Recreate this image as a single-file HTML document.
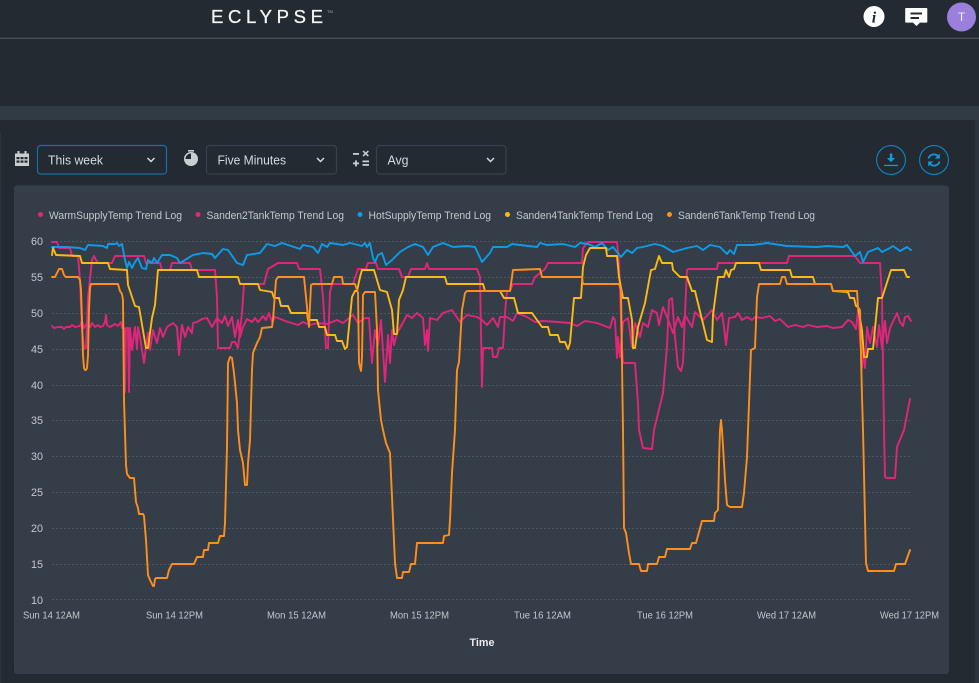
<!DOCTYPE html>
<html><head><meta charset="utf-8"><title>Eclypse</title>
<style>
html,body{margin:0;padding:0;background:#232a32;width:979px;height:683px;overflow:hidden;font-family:"Liberation Sans",sans-serif}
svg{position:absolute;left:0;top:0}
</style></head><body>
<svg width="979" height="683" viewBox="0 0 979 683" xmlns="http://www.w3.org/2000/svg" font-family="Liberation Sans, sans-serif">
<defs><filter id="soft" x="-2%" y="-2%" width="104%" height="104%"><feGaussianBlur stdDeviation="0.3"/></filter></defs>
<rect width="979" height="683" fill="#232a32"/>
<rect x="0" y="37.500" width="979" height="1.500" fill="#434b55"/>
<rect x="0" y="106" width="979" height="14" fill="#323a44"/>
<rect x="975" y="120" width="4" height="563" fill="#2c343d"/>
<rect x="0" y="132" width="1" height="551" fill="#2c343d"/>
<rect x="14" y="185.500" width="935" height="488.500" rx="3" fill="#353d48"/>

<!-- header -->
<text x="211" y="23" font-size="18.500" fill="#f2f4f5" stroke="#f2f4f5" stroke-width="0.300" textLength="112" lengthAdjust="spacing">ECLYPSE</text>
<text x="327" y="13" font-size="4" fill="#aab0b6">TM</text>
<circle cx="874" cy="16.500" r="10.500" fill="#fff"/>
<text x="874" y="22.500" font-size="16" font-weight="bold" font-style="italic" font-family="Liberation Serif, serif" fill="#232a32" text-anchor="middle">i</text>
<path d="M906 8h20.500a.8.800 0 0 1 .8.800v13a.8.800 0 0 1-.8.800h-6.500l-3.500 3.400-3.500-3.400h-7a.8.800 0 0 1-.8-.800v-13a.8.800 0 0 1 .8-.800z" fill="#fff"/>
<path d="M910.500 12.500h11.500v2h-11.500zM910.500 17h8.500v2h-8.500z" fill="#232a32"/>
<circle cx="961.500" cy="17" r="14.500" fill="#9a7fdc"/>
<text x="961.500" y="21" font-size="12" fill="#f3effc" text-anchor="middle">T</text>

<!-- toolbar icons -->
<g fill="#c9ced3">
<path d="M15 153.500h14v12.500h-14z"/>
<rect x="17.500" y="151" width="2" height="3"/><rect x="24.500" y="151" width="2" height="3"/>
</g>
<g fill="#232a32">
<rect x="16.500" y="157" width="3" height="2.200"/><rect x="20.500" y="157" width="3" height="2.200"/><rect x="24.500" y="157" width="3" height="2.200"/>
<rect x="16.500" y="160.500" width="3" height="2.200"/><rect x="20.500" y="160.500" width="3" height="2.200"/><rect x="24.500" y="160.500" width="3" height="2.200"/>
</g>
<rect x="188" y="150" width="6" height="1.600" fill="#c9ced3"/>
<circle cx="191" cy="159" r="7" fill="#c9ced3"/>
<path d="M191 159v-5.500a5.500 5.500 0 0 0-5.500 5.500z" fill="#232a32"/>
<g fill="#c9ced3">
<rect x="353" y="153" width="6" height="1.800"/>
<path d="M362.500 151.500l1.200-1 2 2 2-2 1.200 1-2 2 2 2-1.200 1-2-2-2 2-1.200-1 2-2z"/>
<rect x="353" y="162.500" width="6" height="1.800"/><rect x="355.100" y="160.400" width="1.800" height="6"/>
<rect x="362.500" y="160.500" width="6.500" height="1.800"/><rect x="362.500" y="164" width="6.500" height="1.800"/>
</g>

<!-- selects -->
<rect x="37.500" y="145.500" width="129" height="28.500" rx="3" fill="#232a32" stroke="#1a6fa3" stroke-width="1.200"/>
<rect x="206.500" y="145.500" width="130" height="28.500" rx="3" fill="#232a32" stroke="#39414b" stroke-width="1.200"/>
<rect x="376.500" y="145.500" width="129.500" height="28.500" rx="3" fill="#232a32" stroke="#39414b" stroke-width="1.200"/>
<g font-size="12.500" fill="#d6dadd">
<text x="48" y="164.300" textLength="55" lengthAdjust="spacingAndGlyphs">This week</text>
<text x="217.500" y="164.300" textLength="68.500" lengthAdjust="spacingAndGlyphs">Five Minutes</text>
<text x="387.500" y="164.300" textLength="21" lengthAdjust="spacingAndGlyphs">Avg</text>
</g>
<g fill="none" stroke="#d6dadd" stroke-width="1.500">
<path d="M147.500 158l3.500 3.500 3.500-3.500"/>
<path d="M317 158l3.500 3.500 3.500-3.500"/>
<path d="M487 158l3.500 3.500 3.500-3.500"/>
</g>

<!-- buttons -->
<circle cx="891" cy="160" r="14.400" fill="none" stroke="#0f86c4" stroke-width="1.100"/>
<circle cx="934" cy="160" r="14.400" fill="none" stroke="#0f86c4" stroke-width="1.100"/>
<path d="M889.800 153.500h2.500v4.500h2.800l-4.100 4.200-4.100-4.200h2.900z" fill="#0f9be0"/>
<rect x="884" y="164.800" width="14" height="1.300" fill="#0f9be0"/>
<g fill="none" stroke="#0f9be0" stroke-width="1.700">
<path d="M928.500 158.500a5.600 5.600 0 0 1 9.800-2"/>
<path d="M939.500 161.500a5.600 5.600 0 0 1-9.800 2"/>
</g>
<path d="M939.800 153.500v5h-5zM928.200 166.500v-5h5z" fill="#0f9be0"/>

<!-- legend -->
<g font-size="10.800" fill="#c3c8cd">
<text x="49" y="219" textLength="133" lengthAdjust="spacingAndGlyphs">WarmSupplyTemp Trend Log</text>
<text x="206.500" y="219" textLength="137.500" lengthAdjust="spacingAndGlyphs">Sanden2TankTemp Trend Log</text>
<text x="368.500" y="219" textLength="122.500" lengthAdjust="spacingAndGlyphs">HotSupplyTemp Trend Log</text>
<text x="516" y="219" textLength="137" lengthAdjust="spacingAndGlyphs">Sanden4TankTemp Trend Log</text>
<text x="678" y="219" textLength="137" lengthAdjust="spacingAndGlyphs">Sanden6TankTemp Trend Log</text>
</g>
<circle cx="40.500" cy="214.500" r="2.500" fill="#e5276f"/>
<circle cx="198" cy="214.500" r="2.500" fill="#e5276f"/>
<circle cx="360" cy="214.500" r="2.500" fill="#0f9be8"/>
<circle cx="507.500" cy="214.500" r="2.500" fill="#fdb913"/>
<circle cx="669.500" cy="214.500" r="2.500" fill="#ff8f1f"/>

<!-- grid -->
<g stroke="#4f5761" stroke-width="1" stroke-dasharray="2 2">
<path d="M52 241.500H911M52 277.500H911M52 313.500H911M52 349.500H911M52 385.500H911M52 420.500H911M52 456.500H911M52 492.500H911M52 528.500H911M52 564.500H911M52 599.500H911"/>
</g>
<g font-size="10.800" fill="#c3c8cd" text-anchor="end">
<text x="43" y="245">60</text><text x="43" y="281">55</text><text x="43" y="317">50</text><text x="43" y="353">45</text><text x="43" y="389">40</text><text x="43" y="424">35</text><text x="43" y="460">30</text><text x="43" y="496">25</text><text x="43" y="532">20</text><text x="43" y="568">15</text><text x="43" y="604">10</text>
</g>
<g font-size="10.500" fill="#c3c8cd">
<text x="23" y="618.500" textLength="57" lengthAdjust="spacingAndGlyphs">Sun 14 12AM</text>
<text x="146" y="618.500" textLength="57" lengthAdjust="spacingAndGlyphs">Sun 14 12PM</text>
<text x="267" y="618.500" textLength="59" lengthAdjust="spacingAndGlyphs">Mon 15 12AM</text>
<text x="390" y="618.500" textLength="59" lengthAdjust="spacingAndGlyphs">Mon 15 12PM</text>
<text x="514" y="618.500" textLength="57" lengthAdjust="spacingAndGlyphs">Tue 16 12AM</text>
<text x="637" y="618.500" textLength="56" lengthAdjust="spacingAndGlyphs">Tue 16 12PM</text>
<text x="757" y="618.500" textLength="59" lengthAdjust="spacingAndGlyphs">Wed 17 12AM</text>
<text x="880" y="618.500" textLength="59" lengthAdjust="spacingAndGlyphs">Wed 17 12PM</text>
</g>
<text x="482" y="646" font-size="10.800" font-weight="bold" fill="#e8eaec" text-anchor="middle">Time</text>

<!-- series -->
<g fill="none" stroke-width="1.900" stroke-linejoin="round" stroke-linecap="round" filter="url(#soft)">
<path stroke="#e0287a" d="M52 326L54 328 58 327 62 327 64 329 66 327 70 327 72 325 75 327 80 326 82 321 84 328 87 323 90 327 92 323 95 327 98 325 100 327 103 326 105 322 106 315 107 325 110 327 115 324 118 326 121 322 122 328 124 328 125 392 126 328 128 328 129 392 130 328 132 350 135 327 137 349 138 327 140 337 144 363 146 347 148 333 150 350 153 330 157 343 160 328 163 337 167 327 173 323 177 327 179 355 182 325 185 337 188 327 192 333 193 323 197 322 202 319 207 318 212 327 217 318 222 323 225 316 228 326 232 317 235 337 238 320 240 337 243 327 247 319 252 322 255 318 258 322 260 320 263 316 266 320 269 313 272 322 275 317 283 320 288 322 298 325 303 322 310 325 318 323 327 324 337 320 343 323 353 315 358 323 365 318 369 318 372 363 375 330 378 345 381 320 385 382 388 335 390 363 392 330 394 345 397 333 400 328 407 315 412 318 417 313 423 318 425 345 427 330 428 351 430 318 437 320 443 313 452 310 460 322 467 315 477 317 482 320 487 325 493 318 498 327 500 317 507 317 513 321 517 313 527 317 535 322 543 321 558 322 570 323 577 326 585 321 597 323 610 328 613 317 615 320 617 358 618 337 620 357 623 322 628 318 632 347 635 323 640 337 643 323 648 327 652 310 657 313 659 325 663 307 667 317 673 333 678 317 682 327 685 315 692 327 695 312 703 320 712 310 717 320 722 313 724 327 726 345 729 318 735 317 738 313 742 320 747 317 752 320 755 317 762 318 770 316 775 321 780 319 788 327 795 325 803 327 808 325 817 327 827 326 833 328 842 327 848 320 852 322 856 329 858 310 862 368 863 347 865 368 867 327 870 343 873 327 877 347 879 325 882 348 885 321 887 343 890 328 897 313 900 322 903 326 905 317 908 316 911 321"/>
<path stroke="#e0287a" d="M52 242L57 242 59 248 70 248 72 256 78 256 80 280 82 330 84 348 86 348 88 297 92 260 94 256 96 260 98 263 112 263 115 256 144 256 146 263 160 263 162 270 170 270 172 263 190 263 192 270 215 270 217 297 218 348 230 348 232 342 235 342 238 348 242 313 244 284 264 284 268 269 278 263 297 263 299 269 320 269 323 297 326 348 328 348 330 292 332 284 353 284 358 269 366 269 368 263 376 263 378 269 399 269 402 277 408 277 411 269 425 269 427 263 429 269 477 269 480 277 482 387 483 348 492 348 493 357 497 357 499 348 503 348 505 313 507 291 510 291 513 284 532 284 535 277 545 269 548 263 582 263 583 248 588 242 617 242 619 263 622 347 623 363 635 363 638 403 639 430 643 448 652 449 654 430 663 393 667 347 669 300 672 298 675 337 678 367 681 371 683 363 685 313 687 270 688 269 717 269 718 263 787 263 789 256 855 256 860 263 880 263 882 297 884 430 885 477 887 478 895 478 897 447 904 430 910 399"/>
<path stroke="#0f9be8" d="M52 247L67 247 80 248 85 250 88 245 103 246 107 248 108 244 115 244 117 243 119 246 122 244 125 260 127 268 129 262 132 268 135 262 138 258 142 268 146 269 148 260 152 263 154 258 157 263 162 255 170 255 177 258 180 263 185 260 193 255 203 253 212 254 215 258 223 249 228 250 237 263 243 265 247 255 260 253 267 244 275 246 282 243 300 249 303 245 313 247 318 253 322 244 327 247 330 243 343 245 350 243 362 246 365 243 367 247 370 243 373 258 375 262 378 255 382 253 386 265 392 260 400 252 408 247 415 244 423 247 428 255 433 247 443 243 453 247 467 246 475 247 482 262 490 253 493 247 507 247 512 244 520 245 537 247 540 243 547 245 563 244 575 247 580 243 588 244 595 247 602 243 608 250 613 247 621 257 627 250 632 253 637 248 643 247 655 244 663 246 673 252 687 248 697 246 703 250 710 245 720 247 727 254 730 250 734 254 737 245 753 245 767 243 787 246 817 247 827 246 843 247 847 245 855 256 860 252 863 262 868 252 878 248 882 252 890 248 893 246 900 251 907 247 911 250"/>
<path stroke="#fdb913" d="M52 255L53 248 56 255 80 256 82 263 108 263 110 269 127 270 128 285 135 306 139 307 146 348 148 348 152 318 155 305 158 270 197 270 199 277 238 277 240 284 258 284 260 290 272 292 274 298 279 298 281 306 288 306 291 313 307 313 308 320 317 320 319 327 325 327 327 335 335 335 337 341 342 341 345 349 347 347 352 297 355 291 357 291 360 277 362 270 374 270 380 290 387 292 392 310 394 334 397 334 399 300 403 290 406 277 445 277 447 284 483 284 485 291 500 291 504 298 514 298 518 313 532 313 542 327 548 327 550 335 558 335 560 342 565 342 568 349 570 343 574 298 581 298 583 267 586 255 590 248 606 248 607 256 617 256 619 277 623 298 628 298 632 320 633 348 635 348 638 327 645 303 651 270 655 269 659 256 662 263 672 263 673 270 680 277 687 277 692 291 695 291 707 340 712 342 713 315 718 277 724 277 726 270 729 277 731 270 734 269 736 263 759 263 761 270 790 270 792 277 813 277 815 284 831 284 833 291 848 292 850 298 854 298 856 306 858 307 862 330 864 357 867 357 868 349 873 349 878 298 882 298 891 270 904 270 907 277 909 277"/>
<path stroke="#ff8f1f" d="M52 277L55 277 57 273 59 269 62 269 64 275 66 277 78 277 80 280 81 290 82 320 83 355 84 368 85 370 86 370 87 368 88 355 89 310 90 288 91 284 118 284 120 291 122 294 123 300 124 400 126 465 127 474 130 478 134 478 135 490 136 502 138 508 139 514 143 514 144 516 146 540 148 575 150 580 153 586 154 586 155 579 156 578 167 578 169 570 172 564 194 564 197 557 203 557 204 550 208 550 209 543 218 543 220 536 224 536 225 523 227 447 228 363 230 357 232 358 234 373 237 403 238 430 240 450 243 463 245 485 247 485 248 463 250 440 252 370 253 353 257 343 260 337 262 328 272 327 273 320 276 280 278 277 304 277 306 297 309 327 311 285 313 284 332 284 334 277 342 277 343 284 355 284 358 293 359 363 361 371 362 357 363 295 365 292 375 292 377 330 378 390 381 420 383 430 386 443 390 453 392 497 395 563 397 578 402 578 403 572 409 572 411 564 415 564 417 543 419 543 443 543 444 536 449 535 450 520 452 473 455 430 457 370 459 362 462 310 465 293 467 291 510 291 513 270 540 269 542 277 582 277 583 284 619 284 621 290 622 363 623 430 624 528 626 533 629 553 631 564 639 564 641 571 647 571 648 564 657 564 659 557 665 557 667 549 690 549 692 543 696 543 702 521 714 521 715 513 718 510 719 463 720 430 721 420 722 430 725 480 727 505 730 507 742 507 744 493 747 457 751 350 755 348 757 297 759 284 780 284 782 277 785 277 787 284 831 284 833 291 857 291 858 307 860 310 862 397 863 430 866 563 868 571 894 571 896 564 905 564 910 550"/>
</g>
</svg>
</body></html>
